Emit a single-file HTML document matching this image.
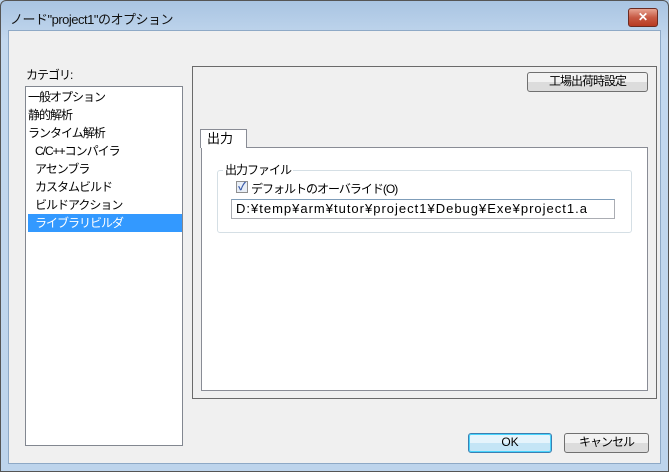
<!DOCTYPE html>
<html><head><meta charset="utf-8"><style>
*{margin:0;padding:0;box-sizing:border-box}
body{width:669px;height:472px;overflow:hidden;font-family:"Liberation Sans","Noto Sans CJK JP",sans-serif;font-size:12px;color:#000;background:#b9d1ea;position:relative}
.a{position:absolute}
.j{letter-spacing:-1px}
.frame{left:0;top:0;width:669px;height:472px;background:linear-gradient(#a9c4e2,#c3d8ee 40px,#bdd4ec);border:1px solid #555;border-radius:6px 6px 0 0}
.client{left:8px;top:30px;width:653px;height:434px;background:#f0f0f0;border:1px solid #8ea9c6}
.btn{border:1px solid #707070;border-radius:3px;background:linear-gradient(#f2f2f2 50%,#dcdcdc 50%);text-align:center;line-height:17px}
.item{position:absolute;left:1px;width:154px;height:18px;line-height:18px;padding-left:1px;letter-spacing:-1px}
</style></head><body>
<div class="a frame"></div>
<div class="a" style="left:10px;top:9px;font-size:13px;color:#111;letter-spacing:-0.5px">ノード"project1"のオプション</div>
<div class="a" style="left:628px;top:8px;width:30px;height:19px;border:1px solid #6b2b22;border-radius:3px;background:linear-gradient(#e8a492,#c75a44 50%,#b83a22);color:#fff;font-weight:bold;text-align:center;line-height:17px;font-size:12px">✕</div>
<div class="a client"></div>
<div class="a j" style="left:26px;top:66px">カテゴリ:</div>
<div class="a" style="left:25px;top:86px;width:158px;height:360px;background:#fff;border:1px solid #828790">
 <div class="item" style="top:1px">一般オプション</div>
 <div class="item" style="top:19px">静的解析</div>
 <div class="item" style="top:37px">ランタイム解析</div>
 <div class="item" style="top:55px;padding-left:8px">C/C++コンパイラ</div>
 <div class="item" style="top:73px;padding-left:8px">アセンブラ</div>
 <div class="item" style="top:91px;padding-left:8px">カスタムビルド</div>
 <div class="item" style="top:109px;padding-left:8px">ビルドアクション</div>
 <div class="item" style="top:127px;left:2px;padding-left:7px;background:#3399ff;color:#fff">ライブラリビルダ</div>
</div>
<div class="a" style="left:192px;top:66px;width:465px;height:333px;border:1px solid #6a6a6a"></div>
<div class="a btn j" style="left:527px;top:72px;width:121px;height:20px">工場出荷時設定</div>
<div class="a" style="left:201px;top:147px;width:447px;height:244px;background:#fff;border:1px solid #898c95"></div>
<div class="a" style="left:200px;top:129px;width:47px;height:19px;background:#fff;border:1px solid #898c95;border-bottom:none;padding-left:6px;line-height:18px;font-size:13px">出力</div>
<div class="a" style="left:217px;top:170px;width:415px;height:63px;border:1px solid #d5dfe5;border-radius:3px"></div>
<div class="a j" style="left:223px;top:161px;background:#fff;padding:0 2px">出力ファイル</div>
<div class="a" style="left:236px;top:181px;width:12px;height:12px;border:1px solid #8f8f8f;background:#e8eef6;color:#3a5aa8;font-size:11px;line-height:10px;text-align:center;font-weight:bold">✓</div>
<div class="a j" style="left:251px;top:180px">デフォルトのオーバライド(O)</div>
<div class="a" style="left:231px;top:199px;width:384px;height:20px;border:1px solid #abadb3;border-top-color:#7f9db9;padding-left:4px;line-height:18px;font-size:13px;letter-spacing:1px">D:¥temp¥arm¥tutor¥project1¥Debug¥Exe¥project1.a</div>
<div class="a btn" style="left:468px;top:433px;width:84px;height:20px;border-color:#3c7fb1;background:linear-gradient(#e5f4fc 50%,#c4e5f6 50%);box-shadow:inset 0 0 0 1px #48d4fd">OK</div>
<div class="a btn j" style="left:564px;top:433px;width:85px;height:20px">キャンセル</div>
</body></html>
